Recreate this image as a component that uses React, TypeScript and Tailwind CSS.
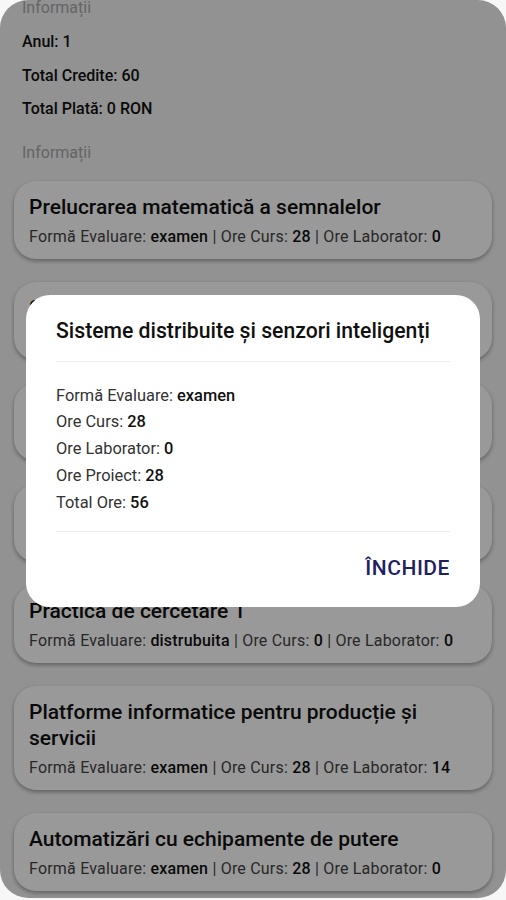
import React from "react";

type Course = {
  name: string;
  evaluare: string;
  curs: number;
  lab: number;
};

const courses: Course[] = [
  { name: "Prelucrarea matematică a semnalelor", evaluare: "examen", curs: 28, lab: 0 },
  { name: "Sisteme distribuite și senzori inteligenți", evaluare: "examen", curs: 28, lab: 0 },
  { name: "Metode de optimizare", evaluare: "examen", curs: 28, lab: 28 },
  { name: "Etică și integritate academică", evaluare: "colocviu", curs: 14, lab: 0 },
  { name: "Practica de cercetare 1", evaluare: "distrubuita", curs: 0, lab: 0 },
  { name: "Platforme informatice pentru producție și servicii", evaluare: "examen", curs: 28, lab: 14 },
  { name: "Automatizări cu echipamente de putere", evaluare: "examen", curs: 28, lab: 0 },
];

function CourseCard({ c }: { c: Course }) {
  return (
    <div className="rounded-[22px] bg-white px-[15px] pt-[13px] pb-[12px] shadow-[0_2px_4px_rgba(0,0,0,0.35)]">
      <div className="text-[21px] font-medium leading-[26px] text-[#111]">{c.name}</div>
      <div className="mt-[7px] text-[16px] leading-[20px] tracking-[0.2px] text-[#444]">
        Formă Evaluare: <span className="font-medium text-[#111]">{c.evaluare}</span>
        {" | "}Ore Curs: <span className="font-medium text-[#111]">{c.curs}</span>
        {" | "}Ore Laborator: <span className="font-medium text-[#111]">{c.lab}</span>
      </div>
    </div>
  );
}

function Dialog() {
  return (
    <div className="w-full rounded-[24px] bg-white px-[30px] pt-[24px] pb-[27px]">
      <div className="text-[21.2px] font-medium leading-[24px] text-[#111]">
        Sisteme distribuite și senzori inteligenți
      </div>
      <div className="mt-[18px] h-px bg-[#ececec]" />
      <div className="mt-[21px] text-[16.4px] leading-[26.7px] text-[#333]">
        <div>Formă Evaluare: <span className="font-medium text-[#111]">examen</span></div>
        <div>Ore Curs: <span className="font-medium text-[#111]">28</span></div>
        <div>Ore Laborator: <span className="font-medium text-[#111]">0</span></div>
        <div>Ore Proiect: <span className="font-medium text-[#111]">28</span></div>
        <div>Total Ore: <span className="font-medium text-[#111]">56</span></div>
      </div>
      <div className="mt-[15px] h-px bg-[#ececec]" />
      <div className="mt-[24px] flex justify-end">
        <button className="text-[21px] font-medium leading-[24px] tracking-wide text-[#1f2160]">ÎNCHIDE</button>
      </div>
    </div>
  );
}

export default function App() {
  return (
    <div className="h-[900px] w-[506px] bg-[#f7f7f7] font-['Roboto',sans-serif]">
      <div className="relative h-[898px] overflow-hidden rounded-[28px] bg-[#f4f4f4]">
        <div className="-mt-[4px] px-[14px]">
          <div className="px-[8px]">
            <div className="text-[16px] leading-[24px] text-[#a8a8a8]">Informații</div>
            <div className="mt-[10px] text-[16px] font-medium leading-[24px] text-[#111]">Anul: 1</div>
            <div className="mt-[10px] text-[16px] font-medium leading-[24px] text-[#111]">Total Credite: 60</div>
            <div className="mt-[9px] text-[16px] font-medium leading-[24px] text-[#111]">Total Plată: 0 RON</div>
            <div className="mt-[20px] text-[16px] leading-[24px] text-[#a8a8a8]">Informații</div>
          </div>
          <div className="mt-[16px] flex flex-col gap-[23px]">
            {courses.map((c) => (
              <CourseCard key={c.name} c={c} />
            ))}
          </div>
        </div>
        <div className="absolute inset-0 flex items-center bg-black/40 px-[26px] pt-[4px]">
          <Dialog />
        </div>
      </div>
    </div>
  );
}
